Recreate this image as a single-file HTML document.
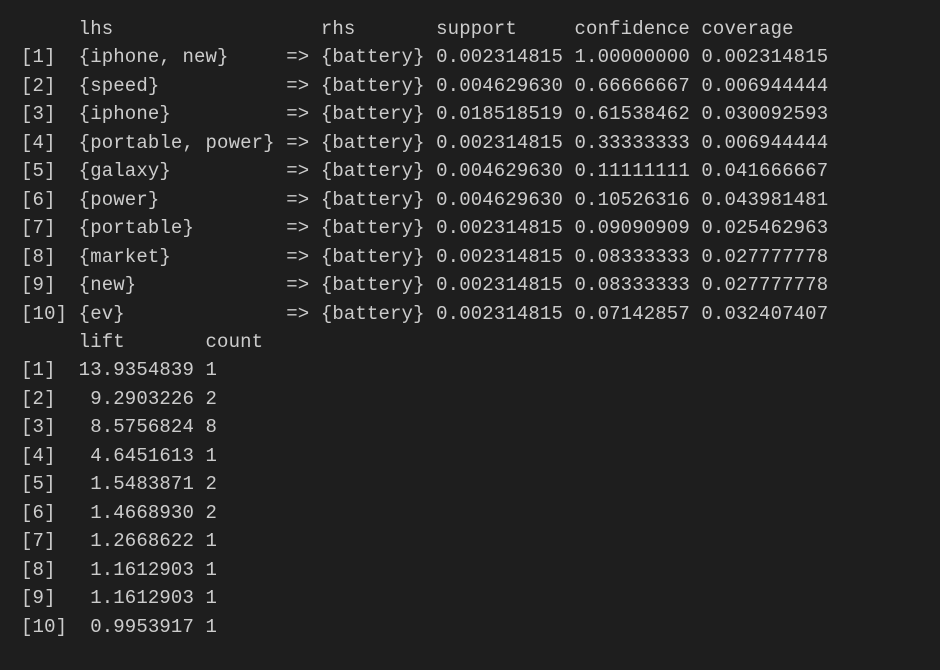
<!DOCTYPE html>
<html><head><style>
html,body{margin:0;padding:0;background:#1e1e1e;width:940px;height:670px;overflow:hidden}
pre{margin:0;position:absolute;left:21px;top:15px;font-family:"Liberation Mono",monospace;font-size:19px;line-height:28.45px;color:#cccccc;letter-spacing:0.13px}
</style></head><body><pre>     lhs                  rhs       support     confidence coverage   
[1]  {iphone, new}     =&gt; {battery} 0.002314815 1.00000000 0.002314815
[2]  {speed}           =&gt; {battery} 0.004629630 0.66666667 0.006944444
[3]  {iphone}          =&gt; {battery} 0.018518519 0.61538462 0.030092593
[4]  {portable, power} =&gt; {battery} 0.002314815 0.33333333 0.006944444
[5]  {galaxy}          =&gt; {battery} 0.004629630 0.11111111 0.041666667
[6]  {power}           =&gt; {battery} 0.004629630 0.10526316 0.043981481
[7]  {portable}        =&gt; {battery} 0.002314815 0.09090909 0.025462963
[8]  {market}          =&gt; {battery} 0.002314815 0.08333333 0.027777778
[9]  {new}             =&gt; {battery} 0.002314815 0.08333333 0.027777778
[10] {ev}              =&gt; {battery} 0.002314815 0.07142857 0.032407407
     lift       count
[1]  13.9354839 1    
[2]   9.2903226 2    
[3]   8.5756824 8    
[4]   4.6451613 1    
[5]   1.5483871 2    
[6]   1.4668930 2    
[7]   1.2668622 1    
[8]   1.1612903 1    
[9]   1.1612903 1    
[10]  0.9953917 1    </pre></body></html>
